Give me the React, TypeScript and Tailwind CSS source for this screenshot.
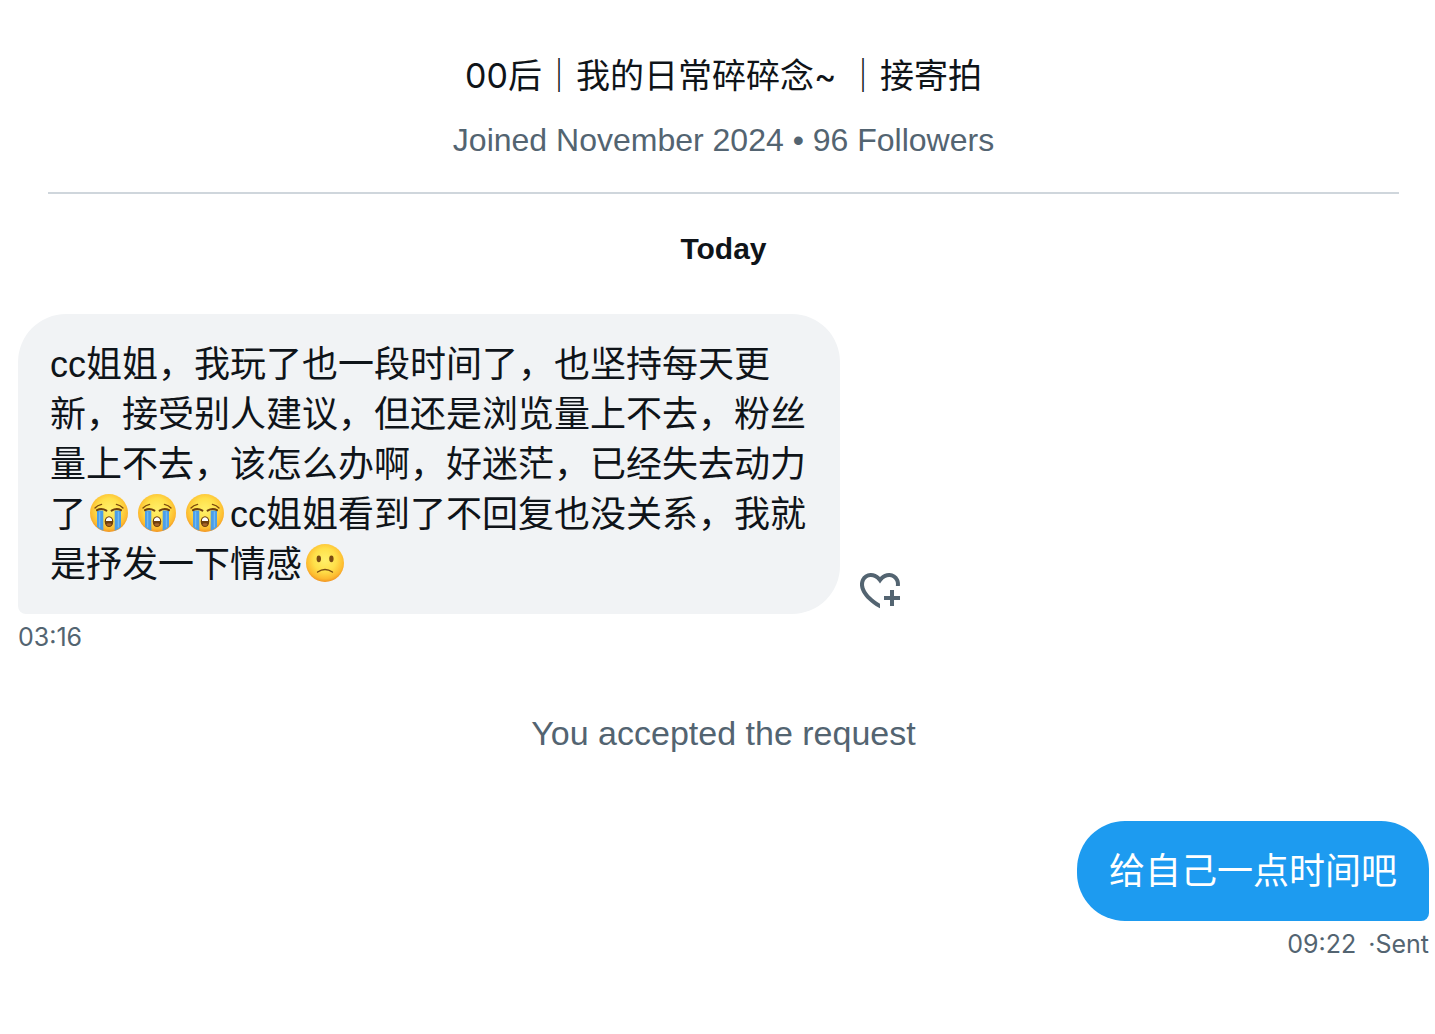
import React from "react";

interface EmojiProps {
  id: string;
}

// Shared face: yellow fading to orange towards the rim
function FaceBase({ id }: EmojiProps) {
  return (
    <>
      <defs>
        <radialGradient id={id} cx="50%" cy="42%" r="60%">
          <stop offset="0%" stopColor="#fff06a" />
          <stop offset="50%" stopColor="#ffe04a" />
          <stop offset="82%" stopColor="#fdbb30" />
          <stop offset="100%" stopColor="#ee8c20" />
        </radialGradient>
      </defs>
      <circle cx="20" cy="20" r="19" fill={`url(#${id})`} />
    </>
  );
}

function CryingEmoji({ id }: EmojiProps) {
  return (
    <svg viewBox="0 0 40 40" role="img" aria-label="loudly crying face" className="inline-block size-10 ml-[3px] mr-[5px] align-[-6px]">
      <FaceBase id={id} />
      <path d="M8 17.5h6.3v20.2q-3.6-1.2-6.3-4z" fill="#4b9ee8" />
      <path d="M32 17.5h-6.3v20.2q3.6-1.2 6.3-4z" fill="#4b9ee8" />
      <path d="M10.6 18.5v16M29.4 18.5v16" stroke="#6fb9f2" strokeWidth="1.4" fill="none" />
      <path d="M8 17.2q4.4-2.6 9.4.4M32 17.2q-4.4-2.6-9.4.4" stroke="#70400d" strokeWidth="2" strokeLinecap="round" fill="none" />
      <path d="M6 15q2.4-2.8 6.6-3.6M34 15q-2.4-2.8-6.6-3.6" stroke="#7d4a0e" strokeWidth="1.3" strokeLinecap="round" fill="none" />
      <ellipse cx="20" cy="28.6" rx="4.3" ry="5.4" fill="#70400d" />
      <path d="M17 26.2q3-3.8 6 0v1.8h-6z" fill="#fff" />
      <ellipse cx="20" cy="31.6" rx="2.5" ry="1.4" fill="#a9652b" />
    </svg>
  );
}

function FrowningEmoji({ id }: EmojiProps) {
  return (
    <svg viewBox="0 0 40 40" role="img" aria-label="slightly frowning face" className="inline-block size-10 ml-[3px] mr-[5px] align-[-6px]">
      <FaceBase id={id} />
      <ellipse cx="13.8" cy="15.8" rx="2.2" ry="3.4" fill="#7a4a12" />
      <ellipse cx="26.4" cy="15.8" rx="2.2" ry="3.4" fill="#7a4a12" />
      <path d="M12.6 29q7.4-5 14.8 0" stroke="#7a4a12" strokeWidth="1.5" strokeLinecap="round" fill="none" />
    </svg>
  );
}

function ReactionIcon() {
  return (
    <svg viewBox="0 0 24 24" className="size-12" fill="currentColor" aria-hidden="true">
      <path d="M17 12v3h-2.998v2h3v3h2v-3h3v-2h-3.001v-3H17zm-5 6.839c-3.871-2.34-6.053-4.639-7.127-6.609-1.112-2.04-1.031-3.7-.479-4.82.561-1.13 1.667-1.84 2.91-1.91 1.222-.06 2.68.51 3.892 2.16l.806 1.09.805-1.09c1.211-1.65 2.668-2.22 3.89-2.16 1.242.07 2.347.78 2.908 1.91.334.677.49 1.554.321 2.59h2.011c.153-1.283-.039-2.469-.539-3.48-.887-1.79-2.647-2.91-4.601-3.01-1.65-.09-3.367.56-4.796 2.01-1.43-1.45-3.147-2.1-4.798-2.01-1.954.1-3.714 1.22-4.601 3.01-.896 1.81-.846 4.17.514 6.67 1.353 2.48 4.003 5.12 8.382 7.67l.502.299v-2.32z" />
    </svg>
  );
}

export default function App() {
  return (
    <main className="min-h-screen bg-white pl-[18px] pr-1.5 pt-[52px] pb-6 text-[#0f1419] font-['Liberation_Sans','Noto_Sans_CJK_SC',sans-serif]">
      {/* Profile summary */}
      <header className="mx-[30px] border-b-2 border-[#cfd6dc] pb-8 text-center">
        <h1 className="text-[34px] leading-[48px] font-normal font-['Inter','Noto_Sans_CJK_SC',sans-serif]">00后｜我的日常碎碎念~ ｜接寄拍</h1>
        <p className="mt-5 text-[32px] leading-10 text-[#536471]">Joined November 2024 • 96 Followers</p>
      </header>

      <h2 className="mt-[35px] text-center text-[30px] leading-10 font-bold">Today</h2>

      {/* Conversation */}
      <section className="mt-[45px]">
        <div className="flex items-end gap-4">
          <p lang="zh-CN" className="w-[822px] rounded-[48px] rounded-bl-lg bg-[#f1f3f5] px-8 pt-[26px] pb-6 text-[36px] leading-[50px]">
            cc姐姐，我玩了也一段时间了，也坚持每天更新，接受别人建议，但还是浏览量上不去，粉丝量上不去，该怎么办啊，好迷茫，已经失去动力了
            <CryingEmoji id="cry-1" />
            <CryingEmoji id="cry-2" />
            <CryingEmoji id="cry-3" />
            cc姐姐看到了不回复也没关系，我就是抒发一下情感
            <FrowningEmoji id="frown" />
          </p>
          <button type="button" aria-label="Add reaction" className="text-[#536471]">
            <ReactionIcon />
          </button>
        </div>
        <time className="mt-[3px] block text-[25px] leading-10 text-[#536471] font-['Inter',sans-serif]">03:16</time>

        <p className="mt-[52px] text-center text-[34px] leading-[48px] text-[#536471]">You accepted the request</p>

        <div className="mt-16 flex flex-col items-end">
          <p lang="zh-CN" className="rounded-[48px] rounded-br-lg bg-[#1d9bf0] px-8 pt-[26px] pb-6 text-[36px] leading-[50px] text-white">
            给自己一点时间吧
          </p>
          <p className="mt-[3px] flex gap-3 text-[25px] leading-10 text-[#536471] font-['Inter',sans-serif]">
            <time>09:22</time>
            <span>·Sent</span>
          </p>
        </div>
      </section>
    </main>
  );
}
